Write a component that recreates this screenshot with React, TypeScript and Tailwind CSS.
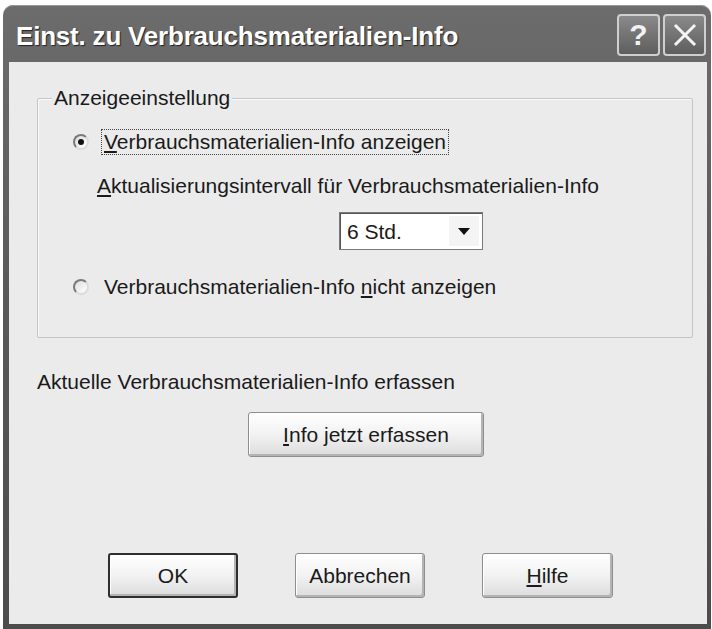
import React from "react";

const FONT = { fontFamily: '"Liberation Sans", Arial, sans-serif' };

function Radio({ checked }: { checked?: boolean }) {
  return (
    <span className="flex h-[16px] w-[16px] shrink-0 items-center justify-center rounded-full border-2 border-t-[#7a7a7a] border-l-[#7a7a7a] border-r-[#dcdcdc] border-b-[#dcdcdc] bg-gradient-to-br from-[#dedede] to-white">
      {checked && <span className="h-[6px] w-[6px] rounded-full bg-[#111]" />}
    </span>
  );
}

function PushButton({
  children,
  width,
  isDefault,
}: {
  children: React.ReactNode;
  width: string;
  isDefault?: boolean;
}) {
  return (
    <button
      type="button"
      className={`flex h-[45px] ${width} items-center justify-center rounded-[3px] bg-gradient-to-b from-white via-[#f2f2f2] to-[#dcdcdc] text-[21px] text-[#1a1a1a] shadow-[inset_-2px_-2px_0_#b4b4b4,inset_1px_1px_0_#ffffff] ${
        isDefault ? "border-2 border-[#2e2e2e]" : "border border-[#8e8e8e]"
      }`}
    >
      {children}
    </button>
  );
}

export default function App() {
  return (
    <div className="h-[629px] w-[712px] bg-white pl-[3px] pr-[1px] pt-[5px]" style={FONT}>
      <div className="flex h-[624px] flex-col overflow-hidden rounded-t-[10px] bg-gradient-to-b from-[#6c6c6c] via-[#585858] to-[#4c4c4c] shadow-[inset_0_1px_0_#9a9a9a]">
        {/* Title bar */}
        <div className="flex h-[57px] shrink-0 items-center justify-between pl-[13px] pr-[5px]">
          <span className="pt-[5px] text-[26px] font-bold tracking-[-0.2px] text-white [text-shadow:1px_1px_1px_#222]">
            Einst. zu Verbrauchsmaterialien-Info
          </span>
          <div className="flex gap-[3px] pt-[2px]">
            <div className="flex h-[42px] w-[43px] items-center justify-center rounded-[4px] border-2 border-[#cfcfcf] bg-gradient-to-b from-[#8a8a8a] to-[#5e5e5e]">
              <span className="text-[30px] font-bold leading-none text-[#f2f2f2]">?</span>
            </div>
            <div className="flex h-[42px] w-[43px] items-center justify-center rounded-[4px] border-2 border-[#cfcfcf] bg-gradient-to-b from-[#8a8a8a] to-[#5e5e5e]">
              <svg width="26" height="26" viewBox="0 0 26 26">
                <path d="M4 4 L22 22 M22 4 L4 22" stroke="#f4f4f4" strokeWidth="3" strokeLinecap="square" />
              </svg>
            </div>
          </div>
        </div>

        {/* Body */}
        <div className="mb-[5px] ml-[6px] mr-[4px] flex flex-1 flex-col bg-[#ebebeb] pl-[28px] pt-[36px] text-[21px] text-[#1a1a1a]">
          {/* Group box */}
          <div className="relative h-[240px] w-[656px] rounded-[2px] border border-[#c4c4c4] shadow-[inset_1px_1px_0_#fafafa]">
            <span className="absolute left-[14px] top-[-14px] bg-[#ebebeb] px-[2px] leading-[26px]">
              Anzeigeeinstellung
            </span>

            <div className="mt-[29px] flex h-[28px] items-center pl-[35px]">
              <Radio checked />
              <span className="ml-[12px] border border-dotted border-[#444] px-[2px] leading-[24px]">
                <u className="underline-offset-2">V</u>erbrauchsmaterialien-Info anzeigen
              </span>
            </div>

            <div className="mt-[18px] pl-[59px] leading-[24px]">
              <u className="underline-offset-2">A</u>ktualisierungsintervall für Verbrauchsmaterialien-Info
            </div>

            <div className="ml-[301px] mt-[14px] flex h-[38px] w-[144px] border border-[#7a7a7a] bg-white shadow-[inset_1px_1px_0_#555]">
              <span className="flex flex-1 items-center pl-[7px] leading-none">6 Std.</span>
              <span className="m-[3px] flex w-[30px] items-center justify-center bg-[#f4f4f4]">
                <svg width="12" height="7" viewBox="0 0 12 7">
                  <path d="M0 0 H12 L6 7 Z" fill="#111" />
                </svg>
              </span>
            </div>

            <div className="mt-[23px] flex h-[28px] items-center pl-[35px]">
              <Radio />
              <span className="ml-[12px] border border-transparent px-[2px] leading-[24px]">
                Verbrauchsmaterialien-Info <u className="underline-offset-2">n</u>icht anzeigen
              </span>
            </div>
          </div>

          <div className="mt-[32px] leading-[24px]">
            Aktuelle Verbrauchsmaterialien-Info erfassen
          </div>

          <div className="mt-[18px] pl-[211px]">
            <PushButton width="w-[236px]">
              <span>
                <u className="underline-offset-2">I</u>nfo jetzt erfassen
              </span>
            </PushButton>
          </div>

          <div className="mt-[96px] flex gap-[57px] pl-[71px]">
            <PushButton width="w-[130px]" isDefault>
              OK
            </PushButton>
            <PushButton width="w-[130px]">Abbrechen</PushButton>
            <PushButton width="w-[131px]">
              <span>
                <u className="underline-offset-2">H</u>ilfe
              </span>
            </PushButton>
          </div>
        </div>
      </div>
    </div>
  );
}
